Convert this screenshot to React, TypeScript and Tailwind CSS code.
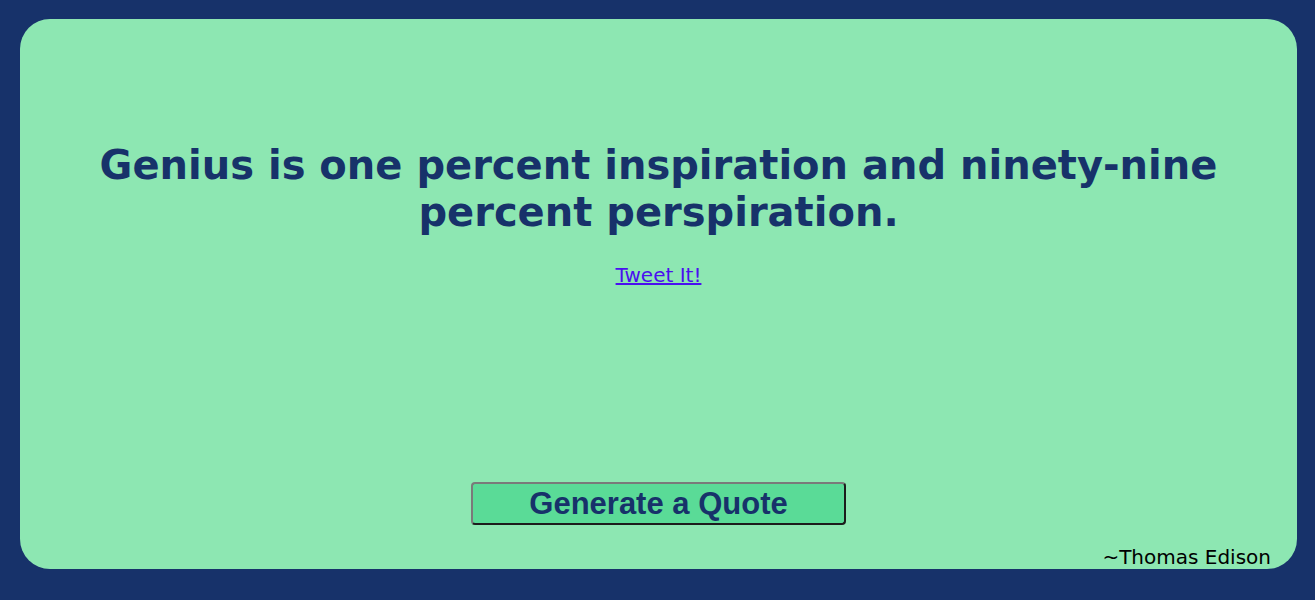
const App = () => {
  return (
    <div className="w-full h-[600px] bg-[#17326a] pt-[19px] pl-[20px] pr-[18px]" style={{ fontFamily: '"DejaVu Sans", sans-serif' }}>
      <div className="h-[550px] bg-[#8de7b2] rounded-[30px] flex flex-col items-center px-[26px]">
        <h1 className="mt-[123px] text-center text-[40px] font-bold leading-[47px] text-[#17326a] max-w-[1140px]">
          Genius is one percent inspiration and ninety-nine percent perspiration.
        </h1>
        <a href="#" className="mt-[28px] text-[20px] leading-[23px] text-[#4a10ef] underline">Tweet It!</a>
        <div className="flex-1" />
        <button className="w-[375px] h-[43px] bg-[#5adb97] text-[#17326a] text-[31px] font-bold leading-none rounded-[4px] border-2 border-t-[#7a7a7a] border-l-[#7a7a7a] border-r-[#1c1c1c] border-b-[#1c1c1c]" style={{ fontFamily: '"Liberation Sans", Arial, sans-serif' }}>
          Generate a Quote
        </button>
        <p className="mt-[21px] self-end text-[20px] leading-[23px] text-black">~Thomas Edison</p>
      </div>
    </div>
  )
}

export default App;
